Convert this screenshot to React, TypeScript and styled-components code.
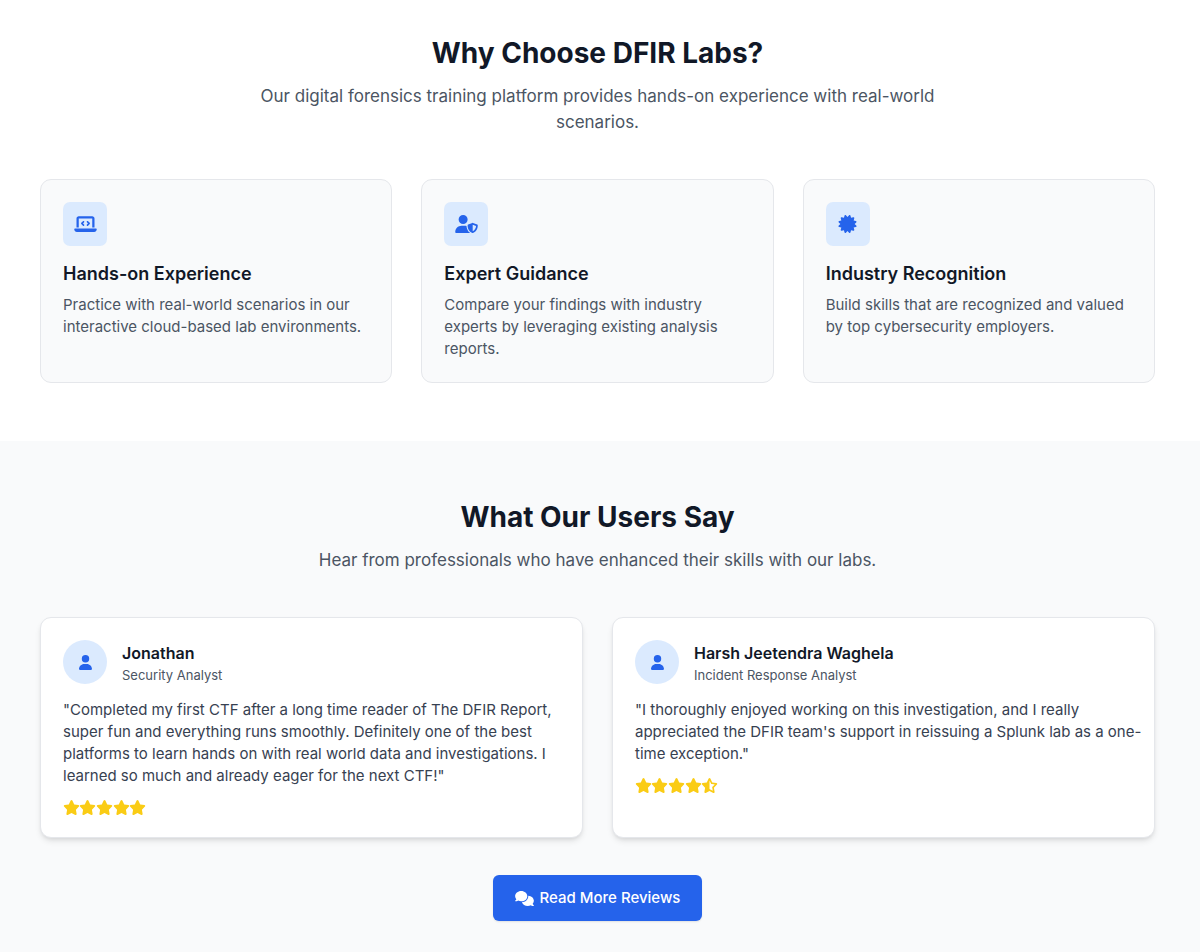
import React from "react";
import styled, { createGlobalStyle } from "styled-components";
import type { IconType } from "react-icons";
import {
  FaCertificate,
  FaComments,
  FaLaptopCode,
  FaStar,
  FaStarHalfStroke,
  FaUser,
  FaUserShield,
} from "react-icons/fa6";

const GlobalStyle = createGlobalStyle`
  *, *::before, *::after { box-sizing: border-box; }
  body {
    margin: 0;
    background: #ffffff;
    color: #111827;
    font-family: Inter, "Liberation Sans", sans-serif;
    font-size: 15px;
    line-height: 22px;
    -webkit-font-smoothing: antialiased;
  }
  h2, h3, p, blockquote { margin: 0; }
  svg { display: block; flex: none; }
`;

const Section = styled.section<{ $tinted?: boolean }>`
  padding: ${(p) => (p.$tinted ? "59px 45px 59px 40px" : "36px 45px 58px 40px")};
  background: ${(p) => (p.$tinted ? "#f9fafb" : "#ffffff")};
`;

const SectionHeader = styled.header`
  display: flex;
  flex-direction: column;
  align-items: center;
  gap: 13px;
  margin-bottom: 44px;
  text-align: center;
`;

const SectionTitle = styled.h2`
  font-size: 28px;
  line-height: 34px;
  font-weight: 700;
`;

const SectionLead = styled.p`
  max-width: 704px;
  color: #4b5563;
  font-size: 17px;
  line-height: 26px;
`;

const CardGrid = styled.div<{ $columns: number }>`
  display: grid;
  grid-template-columns: repeat(${(p) => p.$columns}, minmax(0, 1fr));
  gap: 29px;

  @media (max-width: 760px) {
    grid-template-columns: minmax(0, 1fr);
  }
`;

const FeatureCard = styled.article`
  padding: 22px;
  border: 1px solid #e5e7eb;
  border-radius: 11px;
  background: #f9fafb;
`;

const IconTile = styled.div<{ $round?: boolean }>`
  display: flex;
  flex: none;
  align-items: center;
  justify-content: center;
  width: 44px;
  height: 44px;
  border-radius: ${(p) => (p.$round ? "50%" : "7px")};
  background: #dbeafe;
  color: #2563eb;

  svg {
    width: ${(p) => (p.$round ? "13px" : "23px")};
    height: ${(p) => (p.$round ? "15px" : "18px")};
  }
`;

const FeatureTitle = styled.h3`
  margin: 15px 0 7px;
  font-size: 18px;
  line-height: 26px;
  font-weight: 600;
`;

const FeatureText = styled.p`
  color: #4b5563;
`;

const ReviewCard = styled.article`
  padding: 22px 12px 22px 22px;
  border: 1px solid #e5e7eb;
  border-radius: 11px;
  background: #ffffff;
  box-shadow: 0 4px 6px -1px rgba(0, 0, 0, 0.1), 0 2px 4px -2px rgba(0, 0, 0, 0.1);
`;

const Reviewer = styled.header`
  display: flex;
  align-items: center;
  gap: 15px;
  margin-bottom: 15px;
`;

const ReviewerName = styled.h3`
  font-size: 16px;
  line-height: 26px;
  font-weight: 600;
`;

const ReviewerRole = styled.p`
  color: #4b5563;
  font-size: 13px;
  line-height: 18px;
`;

const Quote = styled.blockquote`
  margin-bottom: 13px;
  color: #374151;
`;

const Rating = styled.div`
  display: grid;
  grid-template-columns: repeat(5, minmax(0, 1fr));
  justify-items: center;
  width: 83px;
  color: #facc15;

  svg {
    width: 17px;
    height: 15px;
  }
`;

const Actions = styled.div`
  display: flex;
  justify-content: center;
  margin-top: 37px;
`;

const ReviewsLink = styled.a`
  display: inline-flex;
  align-items: center;
  gap: 6px;
  padding: 12px 22px;
  border-radius: 6px;
  background: #2563eb;
  color: #ffffff;
  font-weight: 500;
  text-decoration: none;
  box-shadow: 0 1px 2px rgba(0, 0, 0, 0.1);

  svg {
    width: 19px;
    height: 15px;
  }

  &:hover {
    background: #1d4ed8;
  }
`;

const features: { icon: IconType; title: string; text: string }[] = [
  {
    icon: FaLaptopCode,
    title: "Hands-on Experience",
    text: "Practice with real-world scenarios in our interactive cloud-based lab environments.",
  },
  {
    icon: FaUserShield,
    title: "Expert Guidance",
    text: "Compare your findings with industry experts by leveraging existing analysis reports.",
  },
  {
    icon: FaCertificate,
    title: "Industry Recognition",
    text: "Build skills that are recognized and valued by top cybersecurity employers.",
  },
];

const reviews = [
  {
    name: "Jonathan",
    role: "Security Analyst",
    rating: 5,
    quote:
      "Completed my first CTF after a long time reader of The DFIR Report, super fun and everything runs smoothly. Definitely one of the best platforms to learn hands on with real world data and investigations. I learned so much and already eager for the next CTF!",
  },
  {
    name: "Harsh Jeetendra Waghela",
    role: "Incident Response Analyst",
    rating: 4.5,
    quote:
      "I thoroughly enjoyed working on this investigation, and I really appreciated the DFIR team's support in reissuing a Splunk lab as a one-time exception.",
  },
];

function Stars({ value }: { value: number }) {
  const full = Math.floor(value);
  return (
    <Rating role="img" aria-label={`${value} out of 5 stars`}>
      {Array.from({ length: full }, (_, i) => (
        <FaStar key={i} />
      ))}
      {value > full && <FaStarHalfStroke />}
    </Rating>
  );
}

export default function App() {
  return (
    <>
      <GlobalStyle />
      <main>
        <Section>
          <SectionHeader>
            <SectionTitle>Why Choose DFIR Labs?</SectionTitle>
            <SectionLead>
              Our digital forensics training platform provides hands-on experience with real-world
              scenarios.
            </SectionLead>
          </SectionHeader>
          <CardGrid $columns={3}>
            {features.map(({ icon: Icon, title, text }) => (
              <FeatureCard key={title}>
                <IconTile>
                  <Icon aria-hidden />
                </IconTile>
                <FeatureTitle>{title}</FeatureTitle>
                <FeatureText>{text}</FeatureText>
              </FeatureCard>
            ))}
          </CardGrid>
        </Section>
        <Section $tinted>
          <SectionHeader>
            <SectionTitle>What Our Users Say</SectionTitle>
            <SectionLead>
              Hear from professionals who have enhanced their skills with our labs.
            </SectionLead>
          </SectionHeader>
          <CardGrid $columns={2}>
            {reviews.map((review) => (
              <ReviewCard key={review.name}>
                <Reviewer>
                  <IconTile $round>
                    <FaUser aria-hidden />
                  </IconTile>
                  <div>
                    <ReviewerName>{review.name}</ReviewerName>
                    <ReviewerRole>{review.role}</ReviewerRole>
                  </div>
                </Reviewer>
                <Quote>{`"${review.quote}"`}</Quote>
                <Stars value={review.rating} />
              </ReviewCard>
            ))}
          </CardGrid>
          <Actions>
            <ReviewsLink href="#reviews">
              <FaComments aria-hidden />
              Read More Reviews
            </ReviewsLink>
          </Actions>
        </Section>
      </main>
    </>
  );
}
